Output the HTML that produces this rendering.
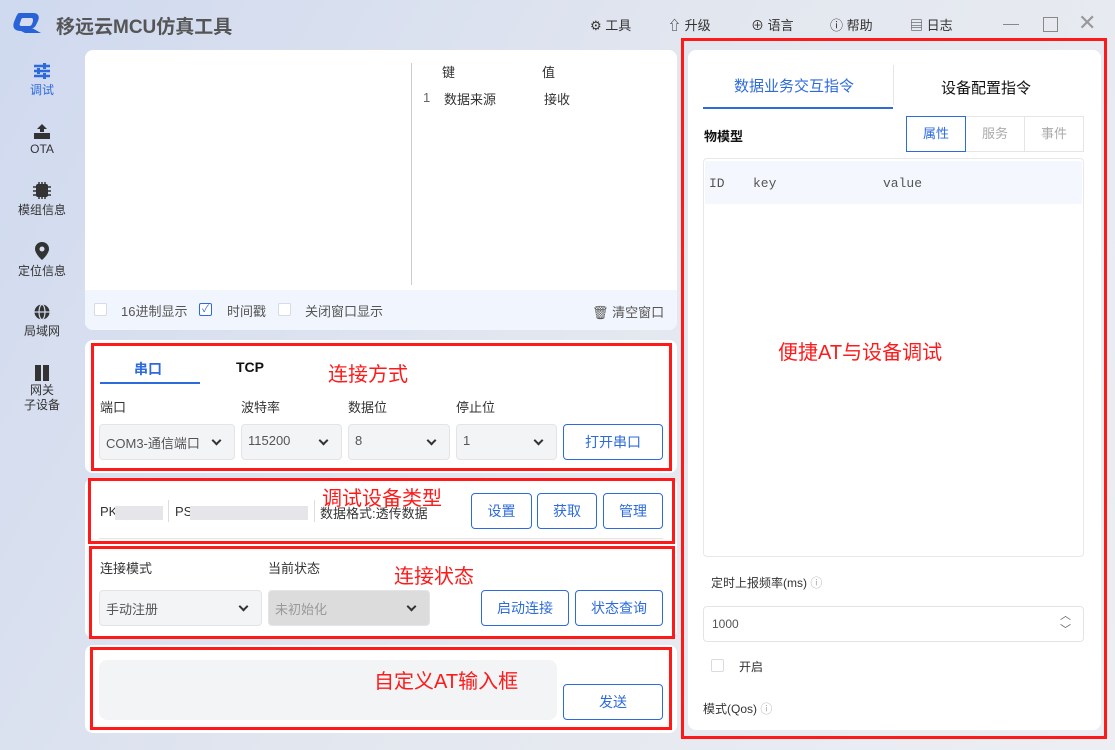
<!DOCTYPE html>
<html><head><meta charset="utf-8"><style>
*{box-sizing:border-box;margin:0;padding:0}
body{width:1115px;height:750px;overflow:hidden;position:relative;font-family:"Liberation Sans","Noto Sans CJK SC",sans-serif;font-size:13px;color:#333;background:linear-gradient(120deg,#cfd9ef 0%,#e3e7ef 50%,#eceef3 100%)}
.a{position:absolute}
.panel{position:absolute;background:#fff;border-radius:8px}
.red{position:absolute;border:3px solid #ff1a1a}
.rt{position:absolute;color:#ff1a1a;font-size:20px}
.lbl{position:absolute;font-size:13px;color:#333}
.sel{position:absolute;height:36px;background:#f3f4f6;border:1px solid #e2e4e8;border-radius:4px;font-size:13px;color:#555;padding:8px 6px}
.sel:after{content:"";position:absolute;right:14px;top:12px;width:5px;height:5px;border-right:2px solid #333;border-bottom:2px solid #333;transform:rotate(45deg)}
.btn{position:absolute;height:36px;border:1px solid #2d6bdd;border-radius:4px;color:#2d6bdd;background:#fff;font-size:14px;text-align:center;line-height:34px}
.nav{position:absolute;left:0;width:84px;text-align:center;font-size:12px;color:#333}
.nav svg{display:block;margin:0 auto 2px}
.cb{position:absolute;width:13px;height:13px;border:1px solid #d8dbe0;background:#fff;border-radius:2px}
.top{position:absolute;top:15px;font-size:13px;color:#333}
</style></head><body>
<!-- title -->
<svg class="a" style="left:11px;top:12px" width="32" height="22" viewBox="0 0 32 22"><path d="M8 1h14c5 0 7 3 5 8l-2 4c-1 2-2 3-4 3l9 5H14l-4-2C4 19 1 16 3 10l2-5C6 3 7 1 8 1z" fill="#2a63d8"/><path d="M12 6h8c2 0 2 1 2 3l-1 3c-1 2-2 2-4 2h-6c-2 0-3-1-2-3l1-3c0-1 1-2 2-2z" fill="#d5ddef"/></svg>
<div class="a" style="left:56px;top:12px;font-size:19px;font-weight:bold;color:#555">移远云MCU仿真工具</div>
<div class="top" style="left:590px">⚙ 工具</div>
<div class="top" style="left:668px">⇧ 升级</div>
<div class="top" style="left:751px">⊕ 语言</div>
<div class="top" style="left:830px">ⓘ 帮助</div>
<div class="top" style="left:910px">▤ 日志</div>
<div class="a" style="left:1003px;top:24px;width:16px;height:1px;background:#888"></div>
<div class="a" style="left:1043px;top:17px;width:15px;height:15px;border:1px solid #888"></div>
<div class="a" style="left:1078px;top:10px;font-size:22px;color:#999">✕</div>
<!-- sidebar -->
<div class="nav" style="top:63px;color:#2d6bdd"><svg width="18" height="16" viewBox="0 0 18 16"><g stroke="#2d6bdd" stroke-width="2.5"><path d="M1 3h16M1 8h16M1 13h16"/></g><g fill="#2d6bdd"><rect x="10" y="0" width="3" height="6"/><rect x="4" y="5" width="3" height="6"/><rect x="10" y="10" width="3" height="6"/></g></svg>调试</div>
<div class="nav" style="top:124px"><svg width="18" height="16" viewBox="0 0 18 16"><path d="M9 0l5 5h-3v3H7V5H4z" fill="#333"/><rect x="1" y="9" width="16" height="6" fill="#333"/></svg>OTA</div>
<div class="nav" style="top:182px"><svg width="18" height="17" viewBox="0 0 18 17"><rect x="3" y="2" width="12" height="13" rx="2" fill="#333"/><g stroke="#333" stroke-width="1.5"><path d="M6 0v17M9 0v17M12 0v17M0 5h18M0 9h18M0 13h18"/></g><rect x="4" y="3" width="10" height="11" fill="#333"/></svg>模组信息</div>
<div class="nav" style="top:242px"><svg width="16" height="18" viewBox="0 0 16 18"><path d="M8 0a7 7 0 0 1 7 7c0 5-7 11-7 11S1 12 1 7a7 7 0 0 1 7-7z" fill="#333"/><circle cx="8" cy="7" r="2.5" fill="#d5ddef"/></svg>定位信息</div>
<div class="nav" style="top:304px"><svg width="16" height="16" viewBox="0 0 16 16"><circle cx="8" cy="8" r="7.5" fill="#333"/><g stroke="#d5ddef" stroke-width="1.2" fill="none"><ellipse cx="8" cy="8" rx="3" ry="7.5"/><path d="M0 8h16"/></g></svg>局域网</div>
<div class="nav" style="top:365px;line-height:15px"><svg width="16" height="16" viewBox="0 0 16 16"><rect x="1" y="0" width="6" height="16" fill="#333"/><rect x="9" y="0" width="6" height="16" fill="#333"/></svg>网关<br>子设备</div>
<!-- top panel -->
<div class="panel" style="left:85px;top:50px;width:592px;height:280px;overflow:hidden">
<div class="a" style="left:0;top:240px;width:592px;height:40px;background:#f1f5fd"></div>
<div class="a" style="left:326px;top:13px;width:1px;height:222px;background:#ccc"></div>
</div>
<div class="lbl" style="left:442px;top:62px">键</div><div class="lbl" style="left:542px;top:62px">值</div>
<div class="lbl" style="left:423px;top:90px;color:#666">1</div><div class="lbl" style="left:444px;top:89px">数据来源</div><div class="lbl" style="left:544px;top:89px">接收</div>
<div class="cb" style="left:94px;top:303px"></div><div class="lbl" style="left:121px;top:301px;color:#555">16进制显示</div>
<div class="cb" style="left:199px;top:303px;border-color:#2d6bdd;color:#2d6bdd;font-size:10px;line-height:11px;text-align:center">✓</div><div class="lbl" style="left:227px;top:301px;color:#555">时间戳</div>
<div class="cb" style="left:278px;top:303px"></div><div class="lbl" style="left:305px;top:301px;color:#555">关闭窗口显示</div>
<div class="lbl" style="left:592px;top:302px;color:#555">🗑 清空窗口</div>
<!-- panels -->
<div class="panel" style="left:85px;top:340px;width:592px;height:133px"></div>
<div class="panel" style="left:85px;top:478px;width:592px;height:160px"></div>
<div class="panel" style="left:85px;top:645px;width:592px;height:88px"></div>
<!-- section 1 -->
<div class="a" style="left:134px;top:359px;font-size:14px;font-weight:bold;color:#2d6bdd">串口</div>
<div class="a" style="left:100px;top:382px;width:100px;height:2px;background:#2d6bdd"></div>
<div class="a" style="left:236px;top:359px;font-size:14px;font-weight:bold;color:#111">TCP</div>
<div class="rt" style="left:328px;top:358px">连接方式</div>
<div class="lbl" style="left:100px;top:397px">端口</div><div class="lbl" style="left:241px;top:397px">波特率</div><div class="lbl" style="left:348px;top:397px">数据位</div><div class="lbl" style="left:456px;top:397px">停止位</div>
<div class="sel" style="left:99px;top:424px;width:136px">COM3-通信端口</div>
<div class="sel" style="left:241px;top:424px;width:101px">115200</div>
<div class="sel" style="left:348px;top:424px;width:102px">8</div>
<div class="sel" style="left:456px;top:424px;width:101px">1</div>
<div class="btn" style="left:563px;top:424px;width:100px">打开串口</div>
<!-- section 2 -->
<div class="lbl" style="left:100px;top:504px">PK</div><div class="a" style="left:115px;top:506px;width:48px;height:14px;background:#e6e6ea"></div>
<div class="a" style="left:168px;top:500px;width:1px;height:22px;background:#ddd"></div>
<div class="lbl" style="left:175px;top:504px">PS</div><div class="a" style="left:190px;top:506px;width:118px;height:14px;background:#e6e6ea"></div>
<div class="a" style="left:314px;top:500px;width:1px;height:22px;background:#ddd"></div>
<div class="lbl" style="left:320px;top:503px">数据格式:透传数据</div>
<div class="rt" style="left:322px;top:482px">调试设备类型</div>
<div class="btn" style="left:471px;top:493px;width:61px">设置</div>
<div class="btn" style="left:537px;top:493px;width:60px">获取</div>
<div class="btn" style="left:603px;top:493px;width:60px">管理</div>
<div class="a" style="left:99px;top:538px;width:564px;height:1px;background:#e5e5e5"></div>
<!-- section 3 -->
<div class="lbl" style="left:100px;top:558px">连接模式</div><div class="lbl" style="left:268px;top:558px">当前状态</div>
<div class="rt" style="left:394px;top:560px">连接状态</div>
<div class="sel" style="left:99px;top:590px;width:163px">手动注册</div>
<div class="sel" style="left:268px;top:590px;width:162px;background:#dcdcdc;color:#999">未初始化</div>
<div class="btn" style="left:481px;top:590px;width:88px">启动连接</div>
<div class="btn" style="left:575px;top:590px;width:88px">状态查询</div>
<!-- section 4 -->
<div class="a" style="left:99px;top:660px;width:458px;height:60px;background:#f3f4f6;border-radius:8px"></div>
<div class="rt" style="left:374px;top:665px">自定义AT输入框</div>
<div class="btn" style="left:563px;top:684px;width:100px">发送</div>
<!-- right -->
<div class="panel" style="left:688px;top:50px;width:413px;height:680px"></div>
<div class="a" style="left:734px;top:75px;font-size:15px;color:#2d6bdd">数据业务交互指令</div>
<div class="a" style="left:703px;top:107px;width:190px;height:2px;background:#2d6bdd"></div>
<div class="a" style="left:893px;top:65px;width:1px;height:40px;background:#e5e5e5"></div>
<div class="a" style="left:941px;top:77px;font-size:15px;color:#111">设备配置指令</div>
<div class="a" style="left:704px;top:126px;font-size:13px;font-weight:bold;color:#111">物模型</div>
<div class="a" style="left:906px;top:116px;width:60px;height:36px;border:1px solid #2d6bdd;color:#2d6bdd;text-align:center;line-height:34px;font-size:13px">属性</div>
<div class="a" style="left:966px;top:116px;width:59px;height:36px;border:1px solid #e5e5e5;border-left:none;color:#aaa;text-align:center;line-height:34px">服务</div>
<div class="a" style="left:1025px;top:116px;width:59px;height:36px;border:1px solid #e5e5e5;border-left:none;color:#aaa;text-align:center;line-height:34px">事件</div>
<div class="a" style="left:703px;top:158px;width:381px;height:399px;border:1px solid #e8e8e8;border-radius:4px"></div>
<div class="a" style="left:705px;top:161px;width:377px;height:43px;background:#f4f7fd"></div>
<div class="lbl" style="left:709px;top:176px;color:#555;font-family:'Liberation Mono',monospace">ID</div>
<div class="lbl" style="left:753px;top:176px;color:#555;font-family:'Liberation Mono',monospace">key</div>
<div class="lbl" style="left:883px;top:176px;color:#555;font-family:'Liberation Mono',monospace">value</div>
<div class="rt" style="left:778px;top:336px">便捷AT与设备调试</div>
<div class="lbl" style="left:711px;top:574px;font-size:12px">定时上报频率(ms) <span style="color:#aaa">ⓘ</span></div>
<div class="a" style="left:703px;top:606px;width:381px;height:36px;border:1px solid #e2e4e8;border-radius:4px;padding:10px 8px;font-size:12px;color:#555">1000<span style="position:absolute;right:12px;top:2px;line-height:14px;color:#666;font-size:11px">︿<br>﹀</span></div>
<div class="cb" style="left:711px;top:659px"></div><div class="lbl" style="left:739px;top:658px;font-size:12px">开启</div>
<div class="lbl" style="left:703px;top:700px;font-size:12px">模式(Qos) <span style="color:#aaa">ⓘ</span></div>
<!-- red boxes -->
<div class="red" style="left:91px;top:343px;width:581px;height:128px"></div>
<div class="red" style="left:88px;top:478px;width:587px;height:66px"></div>
<div class="red" style="left:89px;top:546px;width:586px;height:93px"></div>
<div class="red" style="left:90px;top:647px;width:582px;height:83px"></div>
<div class="red" style="left:681px;top:38px;width:426px;height:701px"></div>
</body></html>
